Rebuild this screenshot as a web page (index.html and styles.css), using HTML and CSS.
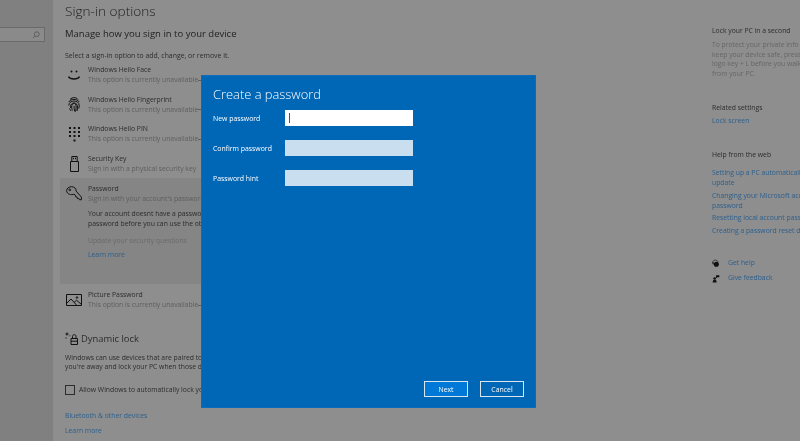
FILE: index.html
```html
<!DOCTYPE html>
<html lang="en">
<head>
<meta charset="utf-8">
<title>Sign-in options</title>
<link rel="stylesheet" href="styles.css">
</head>
<body>
<div class="page">
  <aside class="sidebar">
    <div class="search">
      <svg class="search-icon" viewBox="0 0 10 10"><circle cx="6" cy="4" r="3"/><path d="M3.8 6.2 1 9"/></svg>
    </div>
  </aside>
  <main class="content">
    <h1 class="title">Sign-in options</h1>
    <h2 class="subtitle">Manage how you sign in to your device</h2>
    <p class="intro">Select a sign-in option to add, change, or remove it.</p>

    <div class="option">
      <span class="icon-slot"><svg class="ic-face" viewBox="0 0 12 10"><circle cx="3.500" cy="1.500" r="1" class="fill"/><circle cx="8.500" cy="1.500" r="1" class="fill"/><path d="M.5 6.500c1.500 3.200 9.500 3.200 11 0" class="thick"/></svg></span>
      <div class="opt-text"><div class="opt-name">Windows Hello Face</div><div class="opt-sub">This option is currently unavailable<span class="dash"></span></div></div>
    </div>
    <div class="option">
      <span class="icon-slot"><svg class="ic-finger" viewBox="0 0 12 15"><path d="M2 2.500c2.500-2.500 6-2.500 8 0M.8 5c2-3.500 8.500-3.500 10.400 0M.8 8.500c0-6 10.400-6 10.400 0 0 1 0 2-.5 3M2.500 11c-1-6 7-7 7-1 0 1 0 2.500-.5 4M4.500 13.500c-1.500-3-1-7 1.500-7s2.500 4 1.500 8M6 9c0 2 .3 3.500.8 5.500M1.500 11.500c.3.800 1 2 1.800 2.500"/></svg></span>
      <div class="opt-text"><div class="opt-name">Windows Hello Fingerprint</div><div class="opt-sub">This option is currently unavailable<span class="dash"></span></div></div>
    </div>
    <div class="option">
      <span class="icon-slot"><svg class="ic-pin" viewBox="0 0 11 15"><g class="fill"><rect x="0" y="0" width="2" height="2"/><rect x="4.500" y="0" width="2" height="2"/><rect x="9" y="0" width="2" height="2"/><rect x="0" y="4" width="2" height="2"/><rect x="4.500" y="4" width="2" height="2"/><rect x="9" y="4" width="2" height="2"/><rect x="0" y="8" width="2" height="2"/><rect x="4.500" y="8" width="2" height="2"/><rect x="9" y="8" width="2" height="2"/><rect x="4.500" y="12.500" width="2" height="2"/></g></svg></span>
      <div class="opt-text"><div class="opt-name">Windows Hello PIN</div><div class="opt-sub">This option is currently unavailable<span class="dash"></span></div></div>
    </div>
    <div class="option">
      <span class="icon-slot"><svg class="ic-usb" viewBox="0 0 9 16"><path d="M.5 5.500h8v10h-8zM1.800 5.500V.5h5.400v5"/><path d="M3 2.500h1M5 2.500h1" class="thick"/></svg></span>
      <div class="opt-text"><div class="opt-name">Security Key</div><div class="opt-sub">Sign in with a physical security key</div></div>
    </div>

    <section class="selected">
      <div class="option option-sel">
        <span class="icon-slot"><svg class="ic-key" viewBox="0 0 16 16"><path d="M5.500.7c2.800 0 4.900 2 4.600 4.400l5.400 6.100-.2 2.600-1.900-.1-.6-1.300-1.400.2-.3-1.500-1.500-.4-.2-1.500-1.500-1C5.500 9.500.6 8 .6 4.700.6 2.300 3 .7 5.500.7z"/><circle cx="3.800" cy="3.800" r=".9"/></svg></span>
        <div class="opt-text"><div class="opt-name">Password</div><div class="opt-sub">Sign in with your account's password</div></div>
      </div>
      <div class="sel-body">
        <p class="body-text">Your account doesnt have a password. You need to add a<br>password before you can use the other sign-in options.</p>
        <p class="muted">Update your security questions</p>
        <a class="link sel-link">Learn more</a>
      </div>
    </section>

    <div class="option option-pic">
      <span class="icon-slot"><svg class="ic-pic" viewBox="0 0 16 12"><path d="M.5.5h15v11H.5zM.5 9.500 5 5l5.500 6M8 8.500l2.500-2.300 5 4.300"/><circle cx="11" cy="3.500" r=".8"/></svg></span>
      <div class="opt-text"><div class="opt-name">Picture Password</div><div class="opt-sub">This option is currently unavailable<span class="dash"></span></div></div>
    </div>

    <h2 class="dyn-head">
      <svg class="dyn-icon" viewBox="0 0 13 13"><path d="M6 6.500h6.500v6H6zM7.500 6.500V4.500c0-2.500 3.500-2.500 3.500 0v2M6 9.200h6.500"/><path d="M2 .5v3M.5 2h3M.5 6h1.200M4.500 3.800h.8"/></svg>
      <span>Dynamic lock</span>
    </h2>
    <p class="body-text dyn-text">Windows can use devices that are paired to your PC to know when<br>you're away and lock your PC when those devices go out of range.</p>
    <label class="check"><span class="box"></span><span>Allow Windows to automatically lock your device when you're away</span></label>
    <a class="link bt-link">Bluetooth &amp; other devices</a>
    <a class="link last-link">Learn more</a>
  </main>
  <aside class="right">
    <h3 class="r-head">Lock your PC in a second</h3>
    <p class="r-muted">To protect your private info and help<br>keep your device safe, press Windows<br>logo key + L before you walk away<br>from your PC.</p>
    <h3 class="r-head r-related">Related settings</h3>
    <a class="link r-link-lock">Lock screen</a>
    <h3 class="r-head r-help">Help from the web</h3>
    <a class="link r-link-a">Setting up a PC automatically after an<br>update</a>
    <a class="link r-link-b">Changing your Microsoft account<br>password</a>
    <a class="link r-link-c">Resetting local account password</a>
    <a class="link r-link-c">Creating a password reset disk</a>
    <div class="r-action r-action-first">
      <svg class="r-icon" viewBox="0 0 12 12"><path d="M1 6V4.500C1 2 3 1 5 1s4 1 4 3.500"/><circle cx="6.500" cy="7" r="3.800" class="fill"/><path d="M1 4h1.500v3H1z" class="fill"/></svg>
      <a class="link">Get help</a>
    </div>
    <div class="r-action">
      <svg class="r-icon" viewBox="0 0 12 12"><g class="fill"><circle cx="4" cy="6" r="2"/><path d="M1 12c0-3 1-4 3-4s3 1 3 4zM6 1h5v3H8L6 5.500z"/></g></svg>
      <a class="link">Give feedback</a>
    </div>
  </aside>
</div>

<div class="dialog" role="dialog">
  <h2 class="d-title">Create a password</h2>
  <div class="fields">
    <label class="field"><span class="f-label">New password</span><span class="input input-active"><span class="caret"></span></span></label>
    <label class="field"><span class="f-label">Confirm password</span><span class="input"></span></label>
    <label class="field"><span class="f-label">Password hint</span><span class="input"></span></label>
  </div>
  <div class="actions">
    <button class="btn btn-primary">Next</button>
    <button class="btn">Cancel</button>
  </div>
</div>
</body>
</html>
```
FILE: styles.css
```css
* { box-sizing: border-box; }
html, body { margin: 0; height: 441px; overflow: hidden; }
body { font-family: "Open Sans", "Noto Sans", sans-serif; background: #8e8e8e; color: #222; position: relative; }
p, h1, h2, h3 { margin: 0; font-weight: 400; }
svg { fill: none; stroke: #111; stroke-width: 1; flex: none; display: block; }
.fill { fill: #111; stroke: none; }
.thick { stroke-width: 1.5; }

.page { display: flex; height: 441px; overflow: hidden; filter: blur(.4px); }
.sidebar { width: 53px; flex: none; background: #808080; padding-top: 27px; }
.search { width: 45px; height: 15px; border: 1px solid #6a6a6a; border-left: 0; background: #8a8a8a; display: flex; align-items: center; justify-content: flex-end; padding-right: 4px; }
.search-icon { width: 8px; height: 8px; stroke: #555; }

.content { width: 659px; flex: none; padding-left: 12px; white-space: nowrap; overflow: hidden; }
.title { font-size: 13.600px; font-weight: 300; line-height: 20px; margin-top: 1px; color: #222; }
.subtitle { font-size: 9.500px; line-height: 16px; margin-top: 5px; color: #222; }
.intro { font-size: 6.900px; line-height: 10px; margin: 9px 0 1px; color: #2c2c2c; }

.option { display: flex; gap: 5px; height: 29.500px; align-items: flex-start; padding-top: 3px; }
.icon-slot { width: 18px; height: 20px; flex: none; display: flex; justify-content: center; align-items: center; }
.opt-name { font-size: 6.800px; line-height: 10px; color: #2c2c2c; }
.opt-sub { font-size: 6.800px; line-height: 10px; color: #5e5e5e; display: flex; align-items: center; }
.dash { display: block; width: 50px; height: 1px; background: #5e5e5e; }
.ic-face { width: 12px; height: 10px; }
.ic-finger { width: 12px; height: 15px; }
.ic-pin { width: 11px; height: 15px; }
.ic-usb { width: 9px; height: 16px; }
.ic-key { width: 16px; height: 16px; }
.ic-pic { width: 16px; height: 12px; }

.selected { background: #858585; margin: -2px 0 0 -5px; padding-left: 5px; width: 420px; height: 106px; }
.option-sel { height: 31px; padding-top: 6px; }
.sel-body { padding-left: 23px; }
.body-text { font-size: 6.800px; line-height: 9.500px; color: #2c2c2c; }
.muted { font-size: 6.800px; line-height: 10px; color: #6a6a6a; margin: 8px 0 0; }
.link { display: block; font-size: 6.800px; line-height: 10px; color: #2b5f8e; }
.sel-link { margin: 4px 0 0; }

.option-pic { margin-top: 3px; }
.dyn-head { display: flex; align-items: center; gap: 3px; font-size: 9.400px; line-height: 16px; margin-top: 14px; color: #2c2c2c; }
.dyn-icon { width: 13px; height: 13px; }
.dyn-text { margin-top: 6px; }
.check { display: flex; align-items: center; gap: 4px; font-size: 6.800px; line-height: 10px; color: #2c2c2c; margin-top: 13px; }
.box { width: 10px; height: 10px; border: 1px solid #2c2c2c; flex: none; }
.bt-link { margin-top: 16px; }
.last-link { margin-top: 5px; }

.right { flex: 1; min-width: 0; white-space: nowrap; overflow: hidden; }
.r-head { font-size: 6.800px; line-height: 10px; color: #2c2c2c; margin-top: 26px; }
.r-muted { font-size: 6.800px; line-height: 9.500px; color: #666; margin-top: 4px; }
.r-related { margin-top: 25px; }
.r-link-lock { margin-top: 3px; }
.r-help { margin-top: 24px; }
.r-link-a { margin-top: 8px; line-height: 9.500px; }
.r-link-b { margin-top: 4px; line-height: 9.500px; }
.r-link-c { margin-top: 3px; }
.r-action { display: flex; align-items: center; gap: 8px; height: 12px; margin-top: 3px; }
.r-action-first { margin-top: 21px; }
.r-icon { width: 8px; height: 9px; }

.dialog { position: absolute; left: 201px; top: 75px; width: 335px; height: 333px; background: #0067b7; border: 1px solid #0a6cba; color: #fff; padding: 8px 11px 10px 11px; display: flex; flex-direction: column; filter: blur(.3px); }
.d-title { font-size: 12.900px; font-weight: 300; line-height: 20px; }
.fields { display: flex; flex-direction: column; gap: 14px; margin-top: 6px; }
.field { display: flex; align-items: center; }
.f-label { width: 72px; font-size: 6.900px; }
.input { width: 128px; height: 16px; background: #c9dff0; display: flex; align-items: center; padding-left: 4px; }
.input-active { background: #fff; }
.caret { width: 1px; height: 10px; background: #555; }
.actions { margin-top: auto; display: flex; justify-content: flex-end; gap: 12px; }
.btn { width: 44px; height: 16px; padding: 0; background: transparent; border: 1px solid #d8e6f2; color: #fff; font: 6.900px "Open Sans", sans-serif; }
.btn-primary { background: #0078d7; }
```
